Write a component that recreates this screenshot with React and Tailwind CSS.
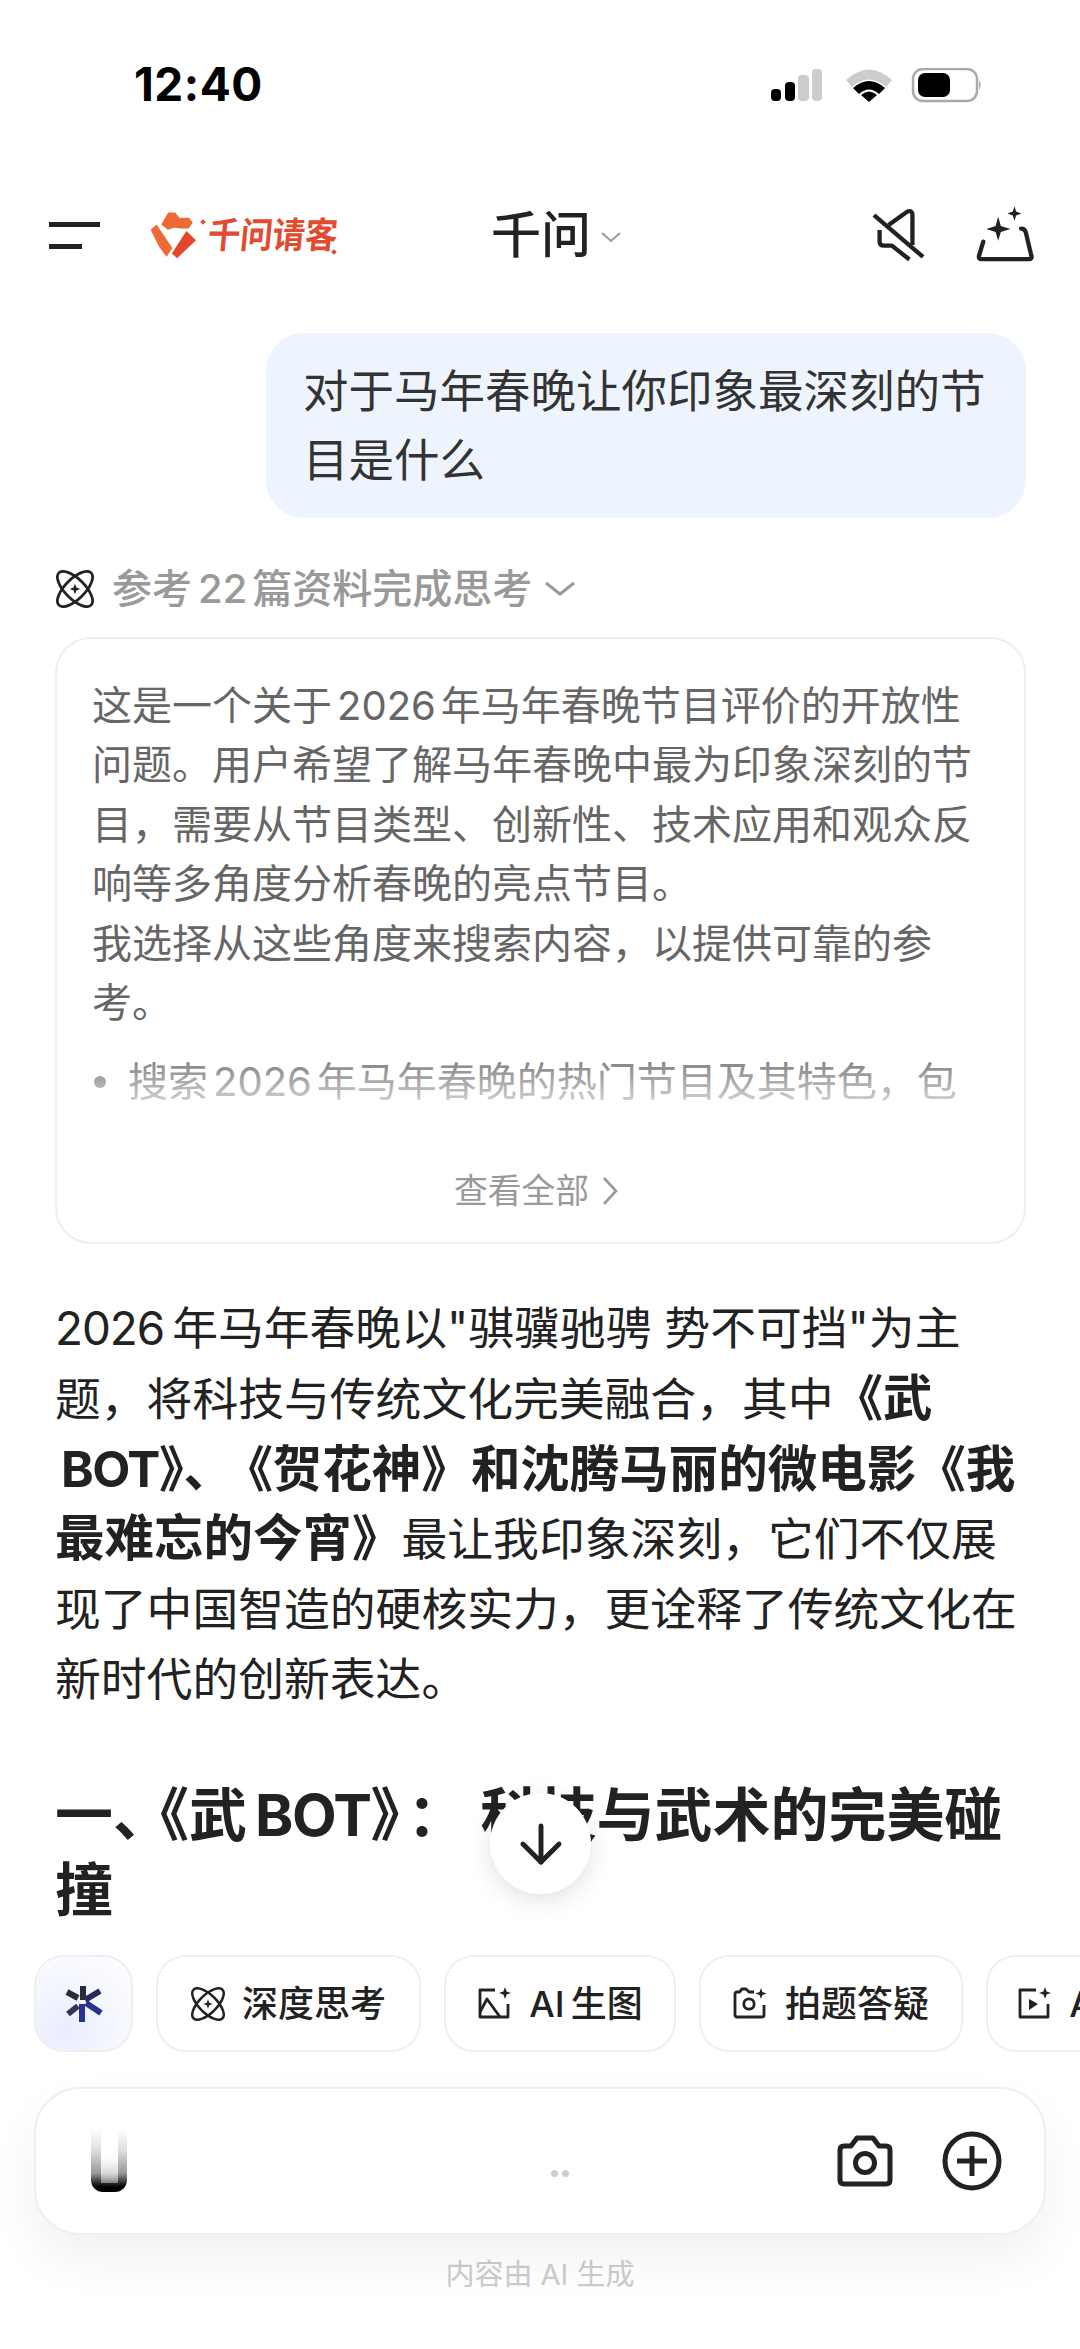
import { ArrowDown } from "lucide-react";

const cjk = { fontFamily: 'Inter, "Noto Sans CJK SC", sans-serif' };

function Atom({ className }) {
  return (
    <svg className={className} viewBox="0 0 40 40" fill="none" stroke="#222" strokeWidth="2.9">
      <ellipse cx="20" cy="20" rx="24" ry="10.5" transform="rotate(45 20 20)" />
      <ellipse cx="20" cy="20" rx="24" ry="10.5" transform="rotate(-45 20 20)" />
      <path d="M20 14.5 L21.5 18.5 L25.5 20 L21.5 21.5 L20 25.5 L18.5 21.5 L14.5 20 L18.5 18.5 Z" fill="#222" stroke="none" />
    </svg>
  );
}

function ImageSpark() {
  return (
    <svg className="h-[33px] w-[35px]" viewBox="0 0 35 33" fill="none" stroke="#222" strokeWidth="2.8" strokeLinejoin="round">
      <path d="M18 3 H3 V30 H31 V17" />
      <path d="M3 25 L10 12 L23 30" />
      <path d="M28 0 L29.6 4.6 L34 6 L29.6 7.6 L28 12 L26.4 7.6 L22 6 L26.4 4.6 Z" fill="#222" stroke="none" />
    </svg>
  );
}

function CameraSpark() {
  return (
    <svg className="h-[33px] w-[35px]" viewBox="0 0 35 33" fill="none" stroke="#222" strokeWidth="2.8" strokeLinejoin="round">
      <path d="M21 5 H16 L13 2 H9 L6.5 5 H4 Q2 5 2 7 V28 Q2 30 4 30 H29 Q31 30 31 28 V18" />
      <circle cx="16" cy="17" r="5.2" />
      <path d="M28 1 L29.4 5 L33.5 6.5 L29.4 8 L28 12 L26.6 8 L22.5 6.5 L26.6 5 Z" fill="#222" stroke="none" />
    </svg>
  );
}

function VideoSpark() {
  return (
    <svg className="h-[33px] w-[35px]" viewBox="0 0 35 33" fill="none" stroke="#222" strokeWidth="2.8" strokeLinejoin="round">
      <path d="M19 3 H3 V30 H31 V17" />
      <path d="M12 12 L21 17 L12 23 Z" fill="#222" stroke="none" />
      <path d="M28 0 L29.6 4.6 L34 6 L29.6 7.6 L28 12 L26.4 7.6 L22 6 L26.4 4.6 Z" fill="#222" stroke="none" />
    </svg>
  );
}

function Chip({ icon, label, className }) {
  return (
    <div className={`flex h-[97px] shrink-0 items-center justify-center gap-[17px] rounded-[30px] border-2 border-[#efefef] bg-white ${className}`}>
      {icon}
      <span className="text-[36px] font-medium whitespace-nowrap text-[#222]">{label}</span>
    </div>
  );
}

export default function App() {
  return (
    <div className="relative h-[2349px] w-[1080px] overflow-hidden bg-white" style={cjk}>
      {/* status bar */}
      <div className="flex h-[108px] items-end justify-between pr-[98px] pl-[134px]">
        <span className="text-[46px] leading-[48px] font-bold tracking-[0.5px] text-black" style={{ fontFamily: "Inter, sans-serif" }}>12:40</span>
        <div className="mb-[4px] flex items-center">
          <svg width="212" height="36" viewBox="0 0 212 36">
            <rect x="1" y="21" width="10" height="12" rx="4" fill="#000" />
            <rect x="15" y="14" width="10" height="19" rx="4" fill="#000" />
            <rect x="28" y="7" width="11" height="26" rx="4" fill="#ccc" />
            <rect x="42" y="1" width="10" height="32" rx="4" fill="#ccc" />
            <path d="M76 12 Q99 -9 122 12 L116 19 Q99 4 82 19 Z" fill="#ccc" />
            <path d="M83 20 Q99 6 115 20 L109 26 Q99 17 89 26 Z" fill="#000" />
            <path d="M91 27 Q99 20 107 27 L99 34 Z" fill="#000" />
            <rect x="143" y="1" width="64" height="32" rx="10" fill="none" stroke="#aaa" strokeWidth="2.5" />
            <rect x="148" y="5" width="32" height="24" rx="7" fill="#000" />
            <path d="M209 12 Q212 17 209 22 Z" fill="#aaa" />
          </svg>
        </div>
      </div>

      {/* header */}
      <div className="mt-[95px] flex h-[64px] items-center pr-[30px] pl-[49px]">
        <div className="flex w-[51px] flex-col gap-[17px]">
          <div className="h-[5px] w-[51px] bg-[#222]" />
          <div className="h-[5px] w-[33px] bg-[#222]" />
        </div>
        <div className="relative ml-[49px] flex w-[188px] items-center">
          <svg className="h-[50px] w-[48px] shrink-0" viewBox="55 65 145 150">
            <path d="M92 108 L113 72 H134 L147 88 H176 L187 102 L175 120 H150 L132 118 L112 124 Z" fill="#ee6a35" />
            <path d="M60 124 L78 108 L126 180 L108 206 L86 176 Z" fill="#ee6a35" />
            <path d="M124 196 L168 128 L197 156 L140 210 Z" fill="#e4452b" />
          </svg>
          <span className="ml-[11px] origin-left scale-x-90 -skew-x-6 text-[36px] leading-none font-bold whitespace-nowrap text-[#e14c30]">千问请客</span>
          <span className="absolute top-[10px] left-[52px] h-[4px] w-[4px] rotate-45 bg-[#e14c30]" />
          <span className="absolute right-[1px] bottom-[6px] h-[4px] w-[4px] rotate-45 bg-[#c9503c]" />
        </div>
        <div className="ml-[154px] flex items-center">
          <span className="text-[50px] leading-none font-medium text-[#222]">千问</span>
          <svg className="mt-[4px] ml-[8px]" width="24" height="14" viewBox="0 0 24 14" fill="none" stroke="#999" strokeWidth="2"><path d="M3 3 L12 11 L21 3" /></svg>
        </div>
        <svg className="ml-[245px]" width="63" height="60" viewBox="50 70 190 180" fill="none" stroke="#222" strokeWidth="13" strokeLinejoin="round">
          <path d="M112 130 L168 90 Q184 84 184 100 V190" />
          <path d="M85 145 V180 Q85 192 98 192 H122 L175 234" />
          <path d="M68 100 L216 226" />
        </svg>
        <svg className="ml-[43px]" width="63" height="60" viewBox="370 65 190 180" fill="none" stroke="#222" strokeWidth="13" strokeLinejoin="round" strokeLinecap="round">
          <path d="M398 175 L385 218 Q383 228 393 228 H535 Q546 228 543 218 L526 146 Q523 136 512 136" />
          <path d="M443 100 L451 128 L480 137 L451 146 L443 172 L435 146 L407 137 L435 128 Z" fill="#222" stroke="none" />
          <path d="M492 68 L497 84 L513 90 L497 96 L492 112 L487 96 L471 90 L487 84 Z" fill="#222" stroke="none" />
        </svg>
      </div>

      {/* question bubble */}
      <div className="mt-[66px] mr-[54px] ml-[266px] rounded-[38px] bg-[#eef4fe] pt-[24px] pb-[23px] pl-[37px] text-[45.5px] leading-[69px] text-[#333]">
        <div className="whitespace-nowrap">对于马年春晚让你印象最深刻的节</div>
        <div>目是什么</div>
      </div>

      {/* thinking summary */}
      <div className="mt-[47px] ml-[56px] flex h-[48px] items-center">
        <Atom className="h-[38px] w-[38px]" />
        <span className="ml-[18px] text-[40px] font-medium whitespace-nowrap text-[#999]">参考<span className="mr-[5px] ml-[6px]">22</span>篇资料完成思考</span>
        <svg className="ml-[12px]" width="32" height="18" viewBox="0 0 32 18" fill="none" stroke="#999" strokeWidth="3"><path d="M2 3 L16 14 L30 3" /></svg>
      </div>

      <div className="mt-[24px] mr-[54px] ml-[55px] h-[607px] rounded-[36px] border-2 border-[#eeeeee] bg-white pt-[37px] pl-[35px]">
        <div className="relative h-[431px] overflow-hidden text-[40px] leading-[59.4px] whitespace-nowrap text-[#666]">
          <div>这是一个关于<span className="mx-[5px]">2026</span>年马年春晚节目评价的开放性</div>
          <div>问题。用户希望了解马年春晚中最为印象深刻的节</div>
          <div>目，需要从节目类型、创新性、技术应用和观众反</div>
          <div>响等多角度分析春晚的亮点节目。</div>
          <div>我选择从这些角度来搜索内容，以提供可靠的参</div>
          <div>考。</div>
          <div className="mt-[20px] flex items-center">
            <span className="ml-[2px] h-[12px] w-[12px] rounded-full bg-[#666]" />
            <span className="ml-[22px]">搜索<span className="mx-[5px]">2026</span>年马年春晚的热门节目及其特色，包</span>
          </div>
          <div className="absolute inset-x-0 bottom-0 h-[62px] bg-gradient-to-b from-white/0 to-white/75" />
        </div>
        <div className="mt-[62px] flex items-center justify-center pr-[43px]">
          <span className="text-[33.8px] leading-[44px] text-[#999]">查看全部</span>
          <svg className="ml-[12px]" width="18" height="30" viewBox="0 0 18 30" fill="none" stroke="#999" strokeWidth="2.6"><path d="M3 2 L15 15 L3 28" /></svg>
        </div>
      </div>

      {/* answer */}
      <div className="mt-[50px] ml-[55px] text-[45.8px] leading-[69.8px] whitespace-nowrap text-[#222]">
        <div><span className="mr-[8px] tracking-[-1px]">2026</span>年马年春晚以"骐骥驰骋 势不可挡"为主</div>
        <div>题，将科技与传统文化完美融合，其中<b className="text-[49.5px]">《武</b></div>
        <div className="pl-[6px] text-[49.5px] font-bold"><span className="tracking-[-1.5px]">BOT</span>》、<span className="pl-[15px]">《贺花神》</span>和沈腾马丽的微电影《我</div>
        <div><b className="text-[49.5px]">最难忘的今宵》</b>最让我印象深刻，它们不仅展</div>
        <div>现了中国智造的硬核实力，更诠释了传统文化在</div>
        <div>新时代的创新表达。</div>
      </div>

      <div className="mt-[63px] ml-[55px] text-[58px] leading-[75px] font-bold whitespace-nowrap text-[#222]">
        <div>一<span className="tracking-[-11px]">、</span>《武<span className="ml-[8px] tracking-[-1.5px]">BOT</span>》<span className="mr-[15px] ml-[8px]">：</span>科技与武术的完美碰</div>
        <div>撞</div>
      </div>

      {/* scroll to bottom */}
      <div className="absolute top-[1793px] left-[490px] flex h-[101px] w-[101px] items-center justify-center rounded-full bg-white shadow-[0_6px_24px_rgba(0,0,0,0.12)]">
        <ArrowDown size={62} strokeWidth={1.9} color="#222" />
      </div>

      {/* bottom dock */}
      <div className="absolute inset-x-0 bottom-0 h-[394px] bg-white">
        <div className="flex gap-[23px] pl-[34px]">
          <div className="flex h-[97px] w-[99px] shrink-0 items-center justify-center rounded-[30px] border-2 border-[#efefef] bg-[radial-gradient(circle_at_30%_80%,#e9ecfe_0%,#f4f6fe_45%,#ffffff_100%)]">
            <svg width="40" height="40" viewBox="0 0 40 40" fill="none" strokeWidth="6">
              <path d="M19 2 V16" stroke="#2a2a3a" />
              <path d="M18 20 V38" stroke="#27338f" />
              <path d="M36 7 L21 16" stroke="#2a2a5a" />
              <path d="M22 19 L37 29" stroke="#27338f" />
              <path d="M3 8 L14 14" stroke="#2a2a3a" />
              <path d="M4 30 L14 22" stroke="#3a3450" />
            </svg>
          </div>
          <Chip className="w-[265px]" icon={<Atom className="h-[34px] w-[34px]" />} label="深度思考" />
          <Chip className="w-[232px]" icon={<ImageSpark />} label={"AI\u2009生图"} />
          <Chip className="w-[264px]" icon={<CameraSpark />} label="拍题答疑" />
          <Chip className="w-[264px]" icon={<VideoSpark />} label={"AI\u2009生视频"} />
        </div>

        <div className="relative mt-[35px] mr-[34px] ml-[34px] flex h-[148px] items-center justify-end rounded-[46px] border-2 border-[#efefef] bg-white pr-[42px] shadow-[0_24px_50px_rgba(0,0,0,0.06)]">
          <div className="absolute top-[40px] left-[55px] h-[63px] w-[36px] rounded-b-[12px] bg-[linear-gradient(to_bottom,#ffffff_0%,#dddddd_35%,#999999_70%,#000000_92%)]">
            <div className="mx-auto h-[54px] w-[17px] bg-gradient-to-b from-white via-white to-white/40" />
          </div>
          <div className="absolute top-[81px] left-[515px] flex gap-[4px]">
            <span className="h-[7px] w-[7px] rounded-full bg-[#ccc]" />
            <span className="h-[7px] w-[7px] rounded-full bg-[#ccc]" />
          </div>
          <svg width="58" height="54" viewBox="0 0 58 54" fill="none" stroke="#222" strokeWidth="5" strokeLinejoin="round">
            <path d="M4 16 Q4 12 8 12 H15 L21 4 H37 L43 12 H50 Q54 12 54 16 V46 Q54 50 50 50 H8 Q4 50 4 46 Z" />
            <circle cx="29" cy="29" r="9.5" />
          </svg>
          <svg className="ml-[48px]" width="60" height="60" viewBox="0 0 60 60" fill="none" stroke="#222" strokeWidth="5">
            <circle cx="30" cy="30" r="27" />
            <path d="M30 15 V45 M15 30 H45" />
          </svg>
        </div>

        <div className="mt-[22px] text-center text-[29px] leading-[36px] text-[#ccc]">内容由 AI 生成</div>
      </div>
    </div>
  );
}
